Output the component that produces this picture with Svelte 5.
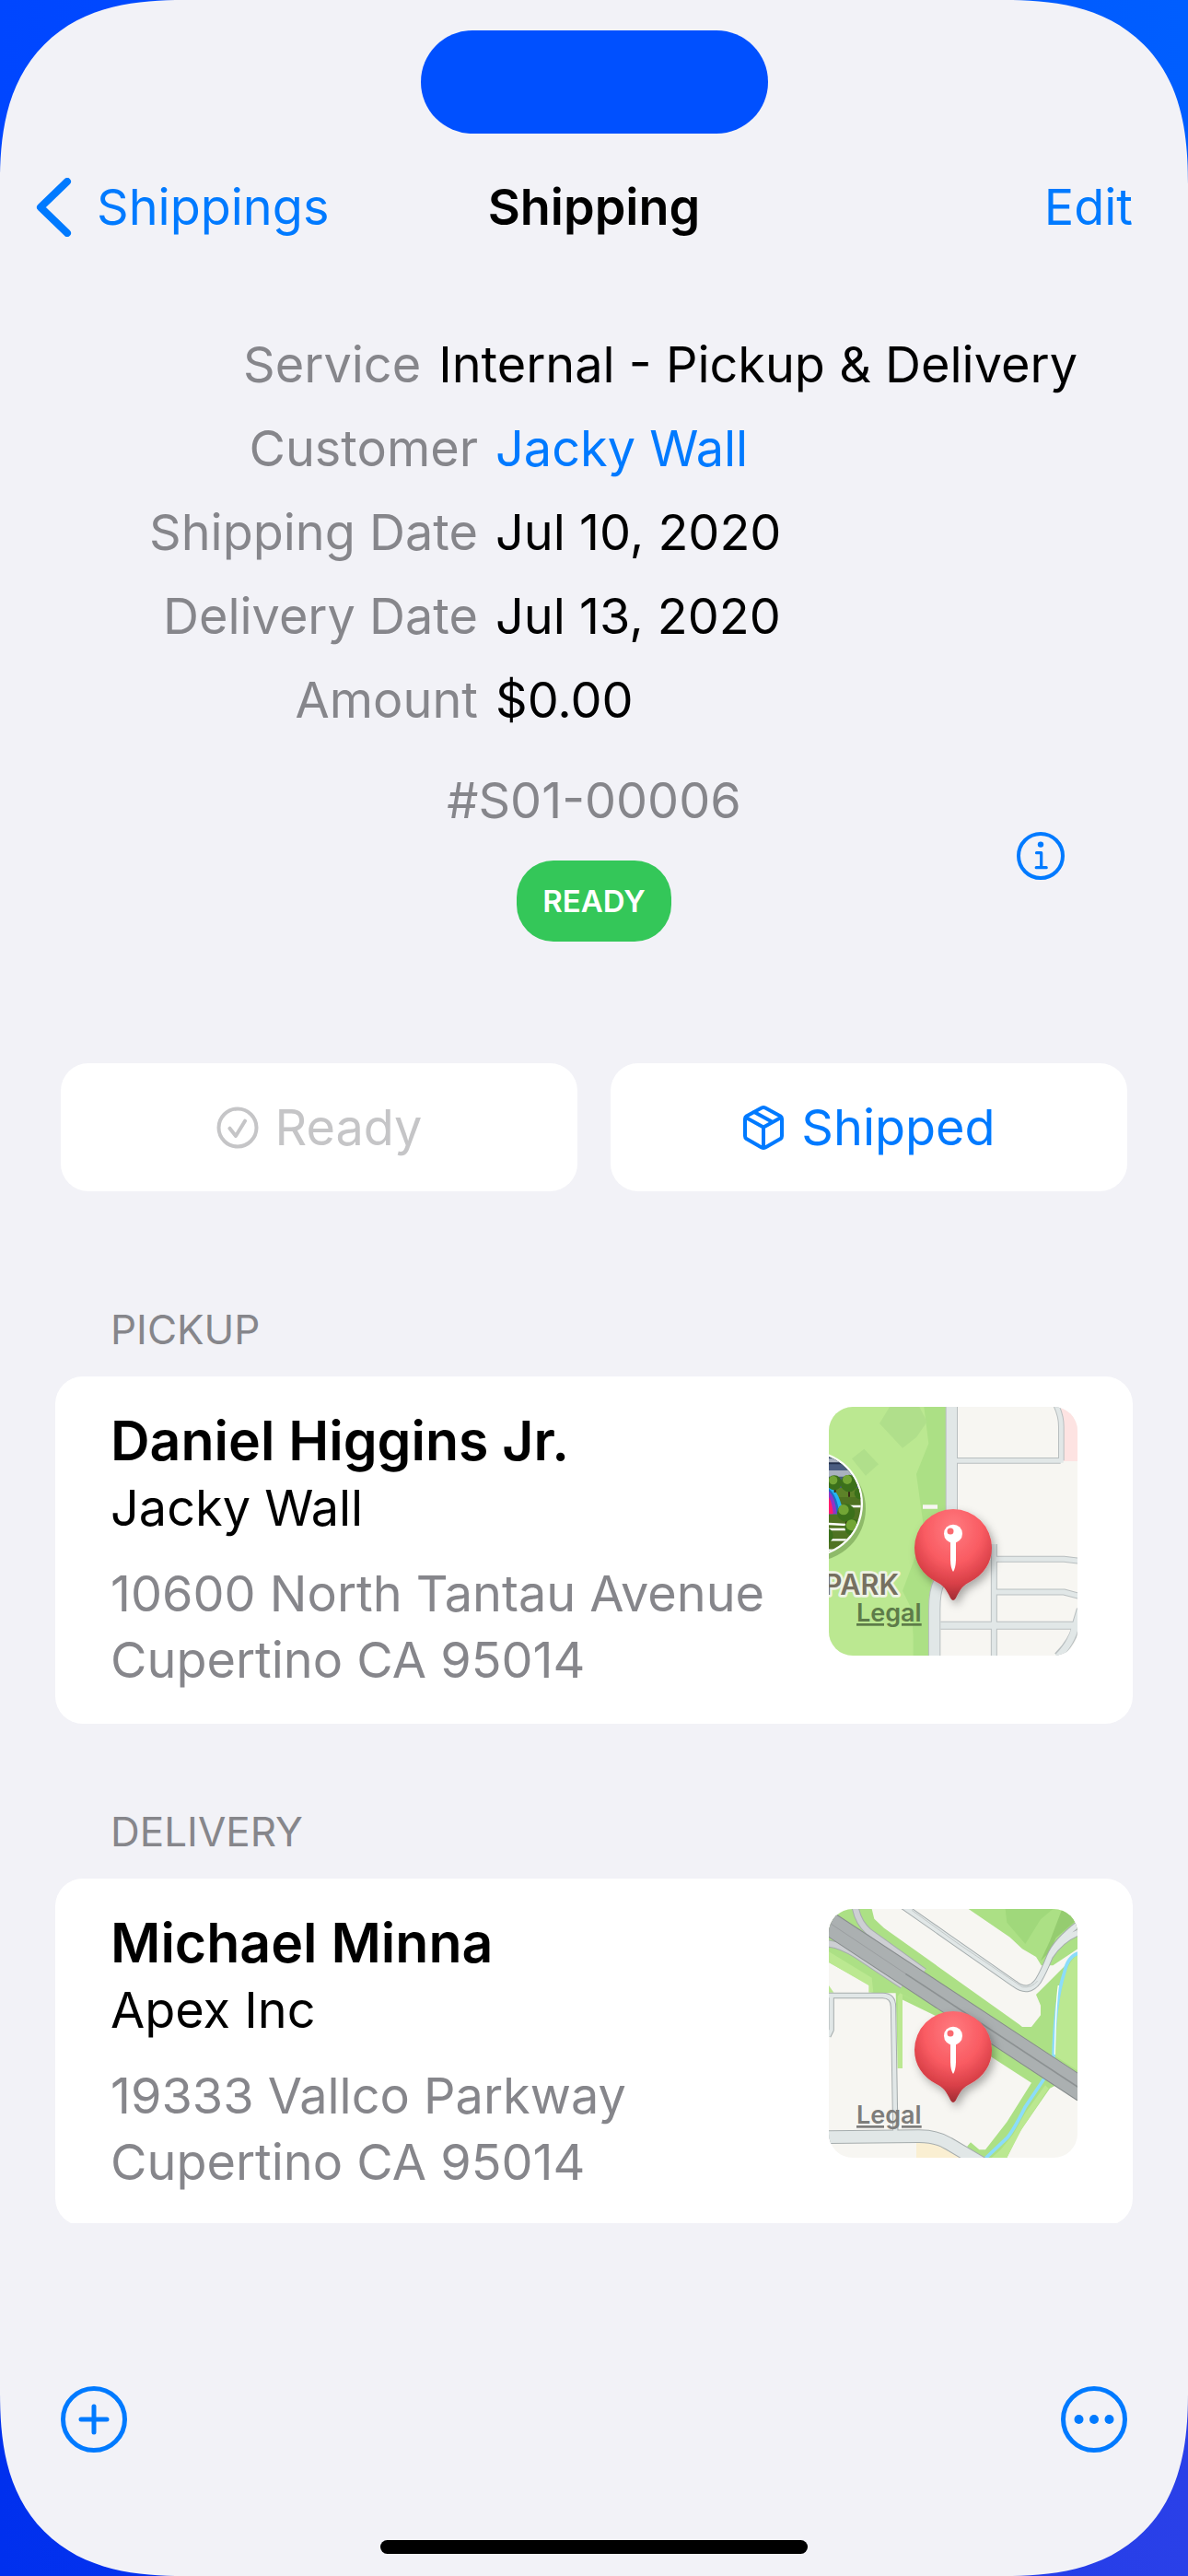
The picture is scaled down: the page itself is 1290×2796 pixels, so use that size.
<script lang="ts">
	type Row = { label: string; value: string; href?: string };
	type Stop = {
		kind: 'pickup' | 'delivery';
		name: string;
		company: string;
		street: string;
		city: string;
	};

	const rows: Row[] = [
		{ label: 'Service', value: 'Internal - Pickup & Delivery' },
		{ label: 'Customer', value: 'Jacky Wall', href: '#customer' },
		{ label: 'Shipping Date', value: 'Jul 10, 2020' },
		{ label: 'Delivery Date', value: 'Jul 13, 2020' },
		{ label: 'Amount', value: '$0.00' }
	];

	const stops: Stop[] = [
		{
			kind: 'pickup',
			name: 'Daniel Higgins Jr.',
			company: 'Jacky Wall',
			street: '10600 North Tantau Avenue',
			city: 'Cupertino CA 95014'
		},
		{
			kind: 'delivery',
			name: 'Michael Minna',
			company: 'Apex Inc',
			street: '19333 Vallco Parkway',
			city: 'Cupertino CA 95014'
		}
	];
</script>

{#snippet pin(id: string)}
	<defs>
		<radialGradient id="{id}-fill" cx="0.5" cy="0.22" r="0.75">
			<stop offset="0" stop-color="#ff7b80" />
			<stop offset="0.5" stop-color="#f95b62" />
			<stop offset="0.8" stop-color="#d83f47" />
			<stop offset="1" stop-color="#a82f36" />
		</radialGradient>
		<filter id="{id}-shadow" x="-30%" y="-30%" width="170%" height="170%">
			<feDropShadow dx="10" dy="14" stdDeviation="14" flood-color="#000" flood-opacity="0.32" />
		</filter>
	</defs>
	<path
		d="M0 -126A126 126 0 0 1 126 0C126 50 98 88 56 110C32 122 24 132 8 165Q0 177 -8 165C-24 132 -32 122 -56 110C-98 88 -126 50 -126 0A126 126 0 0 1 0 -126Z"
		fill="url(#{id}-fill)"
		filter="url(#{id}-shadow)"
	/>
	<path d="M-9 -22H9V40Q8 68 0 78Q-8 68 -9 40Z" fill="#fff" />
	<circle cx="0" cy="-46" r="30" fill="#fff" />
	<circle cx="-9" cy="-54" r="10.500" fill="#fa6a70" />
{/snippet}

{#snippet pickupMap()}
	<svg class="map" viewBox="60 81 810 810" role="img" aria-label="Map of the pickup address">
		<rect x="60" y="81" width="810" height="810" fill="#f7f6f2" />
		<path d="M60 81H442V660L386 720V891H60Z" fill="#bbe891" />
		<path d="M370 81H442V560L400 620L386 700V891H335V830L330 740L300 680L345 560L370 480L345 300L385 200Z" fill="#ace085" />
		<path d="M258 81H355L380 130L345 180L300 215L225 135ZM175 218L222 268L180 305L135 250Z" fill="#b0df8b" />
		<path d="M810 81H870V258H820V130Z" fill="#fde3e2" />
		<path d="M366 400H414V413H366Z" fill="#f7f6f2" />
		<g fill="none" stroke-linejoin="round">
			<g stroke="#b9bfc0">
				<path d="M460 70V540Q458 600 420 650Q404 680 404 740V900" stroke-width="40" />
				<path d="M470 256H815M800 75Q817 110 817 145V256" stroke-width="20" />
				<path d="M598 528V900M606 577H826L880 583M606 684H826L880 698" stroke-width="21" />
				<path d="M424 793H880M864 800Q850 850 805 893M880 740L864 793" stroke-width="27" />
			</g>
			<g stroke="#e1e7e7">
				<path d="M470 256H824M800 75Q817 110 817 145V256" stroke-width="14" />
				<path d="M598 528V900M600 577H826L880 583M600 684H826L880 698" stroke-width="15" />
				<path d="M424 793H880M862 800Q850 850 805 896M880 740L864 793" stroke-width="21" />
				<path d="M460 70V540Q458 600 420 650Q404 680 404 740V900" stroke-width="34" />
			</g>
		</g>
		<!-- landmark badge, cut off by the left edge -->
		<clipPath id="landmark"><circle cx="-2" cy="397" r="166" /></clipPath>
		<circle cx="8" cy="412" r="172" fill="#3d6420" opacity="0.35" />
		<circle cx="-2" cy="397" r="173" fill="#fff" />
		<g clip-path="url(#landmark)">
			<rect x="60" y="220" width="130" height="350" fill="#4f7322" />
			<path d="M60 230H170V350H60Z" fill="#4a5c80" />
			<path d="M60 250H170V264H60ZM60 288H170V308H60Z" fill="#a9b1bf" />
			<path d="M60 262H170V268H60Z" fill="#23304c" />
			<path d="M60 345H170V375H60Z" fill="#5d8228" />
			<path d="M60 405H170M60 462L170 468M60 480H170M60 514H170M60 548H170" stroke="#fff" stroke-width="7" />
			<path d="M60 337Q98 360 106 430H60Z" fill="#25b4f4" />
			<path d="M60 347Q88 370 94 430H60Z" fill="#1d6fc4" />
			<path d="M60 355Q82 378 86 430H60Z" fill="#8e35c8" />
			<path d="M60 374Q72 395 74 430H60Z" fill="#ff1d6d" />
			<path d="M126 350V374M117 450V476M80 346V360" stroke="#3a2c14" stroke-width="6" />
			<g fill="#3b701a">
				<circle cx="78" cy="328" r="24" />
				<circle cx="126" cy="330" r="28" />
				<circle cx="163" cy="362" r="20" />
				<circle cx="116" cy="426" r="29" />
				<circle cx="140" cy="474" r="28" />
				<circle cx="48" cy="500" r="26" />
			</g>
			<g fill="#72a535">
				<circle cx="74" cy="320" r="14" />
				<circle cx="120" cy="318" r="15" />
				<circle cx="108" cy="416" r="17" />
				<circle cx="134" cy="466" r="18" />
			</g>
		</g>
		<text class="place" x="288" y="693" text-anchor="end">PARK</text>
		<text class="legal park-legal" x="150" y="780">Legal</text>
		<g transform="translate(465 540)">{@render pin('pickup-pin')}</g>
	</svg>
{/snippet}

{#snippet deliveryMap()}
	<svg class="map" viewBox="60 66 810 810" role="img" aria-label="Map of the delivery address">
		<rect x="60" y="66" width="810" height="810" fill="#f7f6f2" />
		<path d="M60 66H200L208 98L240 128L680 442L690 450H720L750 412V380L735 345L790 290L880 200V600L800 640L780 650L680 795L640 876H560L510 840L522 826L550 850H570L640 760L720 632L590 548L420 420L292 358V480L298 585H285L278 340H200L190 312L60 240Z" fill="#ace085" />
		<path d="M60 205L200 290L205 338H190V315L60 240ZM60 315L76 338H60Z" fill="#bbe891" />
		<path d="M292 340L420 410L300 345V585H284V350Z" fill="#bbe891" />
		<path d="M515 66H880V190L790 250H752L735 222L690 196L650 158Z" fill="#ace085" />
		<path d="M635 66H790L750 100L700 180L640 110Z" fill="#a0d87b" />
		<path d="M820 66H870V100L800 160L780 205L750 235L780 170Z" fill="#95cc70" />
		<path d="M870 216Q835 240 822 310Q800 400 798 545L870 592Z" fill="#bbe891" />
		<path d="M765 640L700 730L660 800L620 850L590 876H640L690 780L776 650Z" fill="#bbe891" />
		<path d="M345 826H400L490 876H345Z" fill="#faefd2" />
		<g fill="none" stroke-linejoin="round">
			<path d="M872 210Q838 222 828 270Q795 370 792 550M762 618L700 710Q660 790 640 812L568 880" stroke="#8bdcfa" stroke-width="11" />
			<path d="M808 315Q800 370 796 540" stroke="#fff" stroke-width="4" />
			<g stroke="#a5acad">
				<path d="M300 55L450 160L665 310Q710 345 742 300Q760 270 780 220Q800 170 880 110M780 220Q820 160 880 140" stroke-width="23" />
				<path d="M56 348H235Q270 348 270 385L277 790M68 352V460L58 480" stroke-width="19" />
				<path d="M50 809L350 806Q410 805 450 830L560 895" stroke-width="44" />
				<path d="M146 60Q155 110 190 140L370 270M50 178Q95 180 150 215L300 315" stroke-width="24" />
			</g>
			<g stroke="#e1e7e7">
				<path d="M300 55L450 160L665 310Q710 345 742 300Q760 270 780 220Q800 170 880 110M780 220Q820 160 880 140" stroke-width="17" />
				<path d="M56 348H235Q270 348 270 385L277 800M68 348V460L58 480" stroke-width="13" />
				<path d="M50 809L350 806Q410 805 450 830L560 895" stroke-width="38" />
			</g>
			<path d="M146 60Q155 110 190 140L370 270M50 178Q95 180 150 215L300 315" stroke="#cdcfd3" stroke-width="18" />
			<path d="M330 70L480 178L690 320Q720 325 740 300" stroke="#b3b9ba" stroke-width="2" />
			<path d="M30 93L890 658" stroke="#858a8b" stroke-width="78" />
			<path d="M30 93L890 658" stroke="#abb0b1" stroke-width="72" />
			<path d="M60 110L330 290" stroke="#919697" stroke-width="2" />
			<path d="M310 277L890 658" stroke="#8c9192" stroke-width="5" />
		</g>
		<text class="legal" x="150" y="765">Legal</text>
		<g transform="translate(465 525)">{@render pin('delivery-pin')}</g>
	</svg>
{/snippet}

<div class="backdrop">
	<div class="screen">
		<div class="status"><div class="island"></div></div>

		<nav class="navbar">
			<a class="back" href="#shippings">
				<svg width="39" height="64" viewBox="0 0 39 64" fill="none" aria-hidden="true">
					<path d="M34 4L5 32L34 60" stroke="currentColor" stroke-width="8" stroke-linecap="round" stroke-linejoin="round" />
				</svg>
				Shippings
			</a>
			<h1>Shipping</h1>
			<button type="button" class="edit">Edit</button>
		</nav>

		<main>
			<dl class="details">
				{#each rows as row}
					<div class="row">
						<dt>{row.label}</dt>
						<dd>
							{#if row.href}<a href={row.href}>{row.value}</a>{:else}{row.value}{/if}
						</dd>
					</div>
				{/each}
			</dl>

			<div class="summary">
				<div class="state">
					<span class="number">#S01-00006</span>
					<span class="badge">READY</span>
				</div>
				<button type="button" class="info" aria-label="Info">
					<svg width="52" height="52" viewBox="0 0 52 52" fill="none" aria-hidden="true">
						<circle cx="26" cy="26" r="24" stroke="currentColor" stroke-width="4" />
						<circle cx="26" cy="13.600" r="3.200" fill="currentColor" />
						<path d="M21.500 22.700H26.700V38.700M21.200 38.700H32.200" stroke="currentColor" stroke-width="3.200" stroke-linecap="round" stroke-linejoin="round" />
					</svg>
				</button>
			</div>

			<div class="actions">
				<button type="button" disabled>
					<svg width="46" height="46" viewBox="0 0 46 46" fill="none" stroke="currentColor" stroke-width="4" stroke-linecap="round" stroke-linejoin="round" aria-hidden="true">
						<circle cx="23" cy="23" r="20.500" />
						<path d="M14.500 23.700L21 32L31 15.700" />
					</svg>
					Ready
				</button>
				<button type="button">
					<svg width="46" height="50" viewBox="0 0 46 50" fill="none" stroke="currentColor" stroke-width="4" stroke-linejoin="round" stroke-linecap="round" aria-hidden="true">
						<path d="M21 3.500Q23 2.500 25 3.500L41.500 12.500Q43 13.500 43 15.500V34Q43 36 41.500 37L25 46.500Q23 47.500 21 46.500L4.500 37Q3 36 3 34V15.500Q3 13.500 4.500 12.500Z" />
						<path d="M4 14L23 24.500L42 14M23 24.500V46M13 8L33 19" />
					</svg>
					Shipped
				</button>
			</div>

			{#each stops as stop}
				<section>
					<h2>{stop.kind}</h2>
					<div class="card">
						<div class="contact">
							<h3>{stop.name}</h3>
							<p>{stop.company}</p>
							<address>{stop.street}<br />{stop.city}</address>
						</div>
						{#if stop.kind === 'pickup'}
							{@render pickupMap()}
						{:else}
							{@render deliveryMap()}
						{/if}
					</div>
				</section>
			{/each}
		</main>

		<footer>
			<div class="toolbar">
				<button type="button" aria-label="Add">
					<svg width="72" height="72" viewBox="0 0 72 72" fill="none" stroke="currentColor" stroke-width="5" stroke-linecap="round" aria-hidden="true">
						<circle cx="36" cy="36" r="33.500" />
						<path d="M36 22V50M22 36H50" />
					</svg>
				</button>
				<button type="button" aria-label="More">
					<svg width="72" height="72" viewBox="0 0 72 72" fill="currentColor" aria-hidden="true">
						<circle cx="36" cy="36" r="33.500" fill="none" stroke="currentColor" stroke-width="5" />
						<circle cx="19.500" cy="36" r="5" />
						<circle cx="36" cy="36" r="5" />
						<circle cx="52.500" cy="36" r="5" />
					</svg>
				</button>
			</div>
			<div class="home-indicator"></div>
		</footer>
	</div>
</div>

<style>
	:global(body) {
		margin: 0;
	}

	.backdrop {
		--blue: #007aff;
		--gray: #86868b;
		background: linear-gradient(to right, #0030ee, #2a40e8) bottom / 100% 50% no-repeat,
			linear-gradient(to right, #0046ff, #005eff);
		font-family: Inter, 'Liberation Sans', sans-serif;
		font-size: 54px;
		line-height: 72px;
		color: #000;
	}

	.screen {
		display: flex;
		flex-direction: column;
		box-sizing: border-box;
		height: 100vh;
		background: #f2f2f7;
		border-radius: 168px;
		overflow: hidden;
	}

	@supports (corner-shape: superellipse(1.33)) {
		.screen {
			border-radius: 200px;
			corner-shape: superellipse(1.33);
		}
	}

	.status {
		display: flex;
		justify-content: center;
		padding: 33px 0 14px;
	}

	.island {
		width: 377px;
		height: 112px;
		border-radius: 56px;
		background: #0050ff;
	}

	button {
		padding: 0;
		border: 0;
		background: none;
		font: inherit;
		color: var(--blue);
	}

	a {
		color: var(--blue);
		text-decoration: none;
	}

	svg {
		display: block;
		flex: none;
	}

	.navbar {
		display: grid;
		grid-template-columns: 1fr auto 1fr;
		align-items: center;
		height: 132px;
		padding: 0 39px;
	}

	.back {
		display: flex;
		align-items: center;
		gap: 27px;
	}

	.edit {
		justify-self: end;
		padding-right: 21px;
	}

	h1,
	h2,
	h3,
	p,
	dl,
	dd {
		margin: 0;
	}

	h1 {
		font-size: 54px;
		font-weight: 600;
	}

	main {
		flex: 1;
		min-height: 0;
		overflow-y: auto;
		scrollbar-width: none;
	}

	.details {
		padding: 59px 120px 0;
	}

	.row {
		display: flex;
		gap: 19px;
		line-height: 91px;
		white-space: nowrap;
	}

	dt {
		flex: 0 1 38%;
		text-align: right;
		color: var(--gray);
	}

	.summary {
		display: grid;
		grid-template-columns: 1fr auto 1fr;
		align-items: center;
		padding: 30px 134px 132px;
	}

	.state {
		grid-column: 2;
		display: flex;
		flex-direction: column;
		align-items: center;
		gap: 31px;
	}

	.number {
		line-height: 68px;
		color: var(--gray);
	}

	.badge {
		padding: 0 28px;
		border-radius: 40px;
		background: #34c759;
		color: #fff;
		font-size: 33px;
		font-weight: 600;
		line-height: 88px;
	}

	.info {
		justify-self: end;
	}

	.actions {
		display: grid;
		grid-template-columns: 1fr 1fr;
		gap: 36px;
		padding: 0 66px;
		margin-bottom: 122px;
	}

	.actions button {
		display: flex;
		align-items: center;
		justify-content: center;
		gap: 18px;
		height: 139px;
		border-radius: 30px;
		background: #fff;
	}

	.actions button:disabled {
		color: #c5c5c7;
	}

	section {
		padding: 0 60px;
		margin-bottom: 89px;
	}

	h2 {
		padding: 0 60px;
		margin-bottom: 23px;
		font-size: 44px;
		font-weight: 400;
		line-height: 56px;
		text-transform: uppercase;
		color: var(--gray);
	}

	.card {
		display: flex;
		justify-content: space-between;
		padding: 33px 60px;
		border-radius: 30px;
		background: #fff;
	}

	h3 {
		font-size: 59px;
		font-weight: 600;
		line-height: 74px;
	}

	address {
		margin-top: 21px;
		font-style: normal;
		color: var(--gray);
		white-space: nowrap;
	}

	.map {
		width: 270px;
		height: 270px;
		border-radius: 26px;
	}

	.place {
		font-size: 92px;
		font-weight: 600;
		fill: #767060;
		stroke: #eef3e4;
		stroke-width: 16px;
		stroke-linejoin: round;
		paint-order: stroke;
	}

	.legal {
		font-size: 81px;
		font-weight: 600;
		fill: #7d7d7b;
		text-decoration: underline;
		text-decoration-thickness: 9px;
	}

	.park-legal {
		fill: #5d7b49;
	}

	footer {
		display: flex;
		flex-direction: column;
		align-items: center;
		justify-content: space-between;
		box-sizing: border-box;
		height: 383px;
		padding: 177px 0 24px;
	}

	.toolbar {
		display: flex;
		justify-content: space-between;
		align-self: stretch;
		padding: 0 66px;
	}

	.home-indicator {
		width: 36%;
		height: 15px;
		border-radius: 8px;
		background: #000;
	}
</style>
